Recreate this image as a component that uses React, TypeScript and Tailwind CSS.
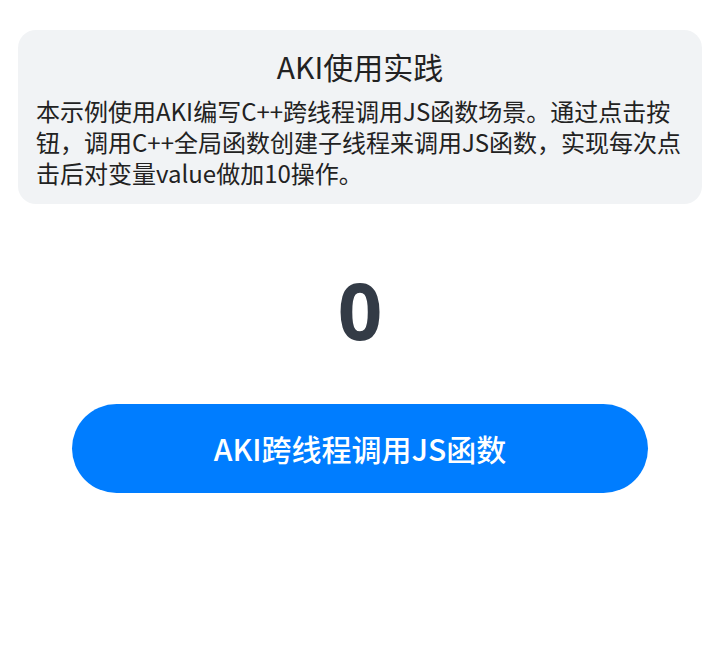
import React, { useState } from "react";

export default function App() {
  const [value, setValue] = useState(0);
  return (
    <div
      className="w-[720px] h-[650px] bg-white flex flex-col items-center"
      style={{ fontFamily: '"Noto Sans CJK SC", "Noto Sans", sans-serif' }}
    >
      <div className="mt-[30px] w-[684px] rounded-[18px] bg-[#f1f3f5] px-[18px] pt-[16px] pb-[16px] flex flex-col">
        <div className="text-center text-[30px] leading-[40px] text-[#222] font-normal">
          AKI使用实践
        </div>
        <p className="mt-[9px] text-[24px] leading-[31px] text-[#222]">
          本示例使用AKI编写C++跨线程调用JS函数场景。通过点击按钮，调用C++全局函数创建子线程来调用JS函数，实现每次点击后对变量value做加10操作。
        </p>
      </div>
      <div
        className="mt-[61px] h-[90px] flex items-center justify-center text-[78px] font-bold text-[#333b46] leading-none"
        style={{ fontFamily: '"Noto Sans", sans-serif' }}
      >
        {value}
      </div>
      <button
        onClick={() => setValue(value + 10)}
        className="mt-[49px] w-[576px] h-[89px] rounded-full bg-[#007dff] text-white text-[30px] font-medium flex items-center justify-center"
      >
        AKI跨线程调用JS函数
      </button>
    </div>
  );
}
